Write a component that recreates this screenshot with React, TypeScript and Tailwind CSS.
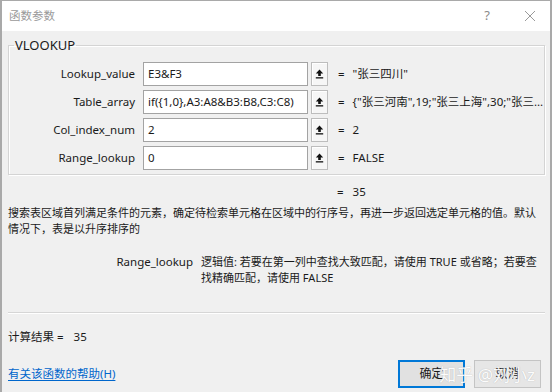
const ui = { fontFamily: '"Noto Sans", "Noto Sans CJK SC", sans-serif' };

function UploadIcon() {
  return (
    <svg width="9" height="10" viewBox="0 0 9 10" aria-hidden="true">
      <path d="M4.5 0.5 L8.2 4.6 H5.8 V7 H3.2 V4.6 H0.8 Z" fill="#111" />
      <rect x="0.8" y="8.2" width="7.4" height="1.3" fill="#111" />
    </svg>
  );
}

type ArgRowProps = { label: string; input: string; value: string };

function ArgRow({ label, input, value }: ArgRowProps) {
  return (
    <div className="flex h-[24px] items-center">
      <div className="w-[126px] text-right text-[11.5px] text-[#1a1a1a]">{label}</div>
      <div className="ml-[8px] flex h-[24px] w-[165px] items-center border border-[#a3a3a3] bg-white pl-[4px] text-[11.5px] text-[#1a1a1a] whitespace-nowrap overflow-hidden">
        {input}
      </div>
      <div className="ml-[3px] flex h-[24px] w-[17px] items-center justify-center border border-[#bdbdbd] bg-[#f6f6f6] shadow-[inset_1px_1px_0_#fff]">
        <UploadIcon />
      </div>
      <div className="ml-[10px] text-[11.5px] text-[#1a1a1a]">=</div>
      <div className="ml-[8px] text-[11.5px] text-[#1a1a1a] whitespace-nowrap">{value}</div>
    </div>
  );
}

export default function App() {
  return (
    <div className="flex h-[392px] w-[554px] overflow-hidden bg-white" style={ui}>
      <div className="flex h-full w-[552px] flex-col border-x-2 border-t border-[#a9a9a9]">
        <div className="flex h-[30px] items-center bg-white pl-[7px] pr-[14px]">
          <span className="text-[11.5px] text-[#9a9a9a]">函数参数</span>
          <span className="ml-auto text-[13px] text-[#8a8a8a]">?</span>
          <svg className="ml-[34px]" width="12" height="12" viewBox="0 0 12 12" aria-hidden="true">
            <path d="M1 1 L11 11 M11 1 L1 11" stroke="#9a9a9a" strokeWidth="1" />
          </svg>
        </div>

        <div className="flex flex-1 flex-col bg-[#f0f0f0] pl-[6px] pr-[5px]">
          <fieldset className="mt-[6px] border border-[#d4d4d4] pb-[4px] shadow-[inset_1px_1px_0_#fff,1px_1px_0_#fff]">
            <legend className="ml-[5px] px-[1px] text-[13px] leading-[16px] text-[#1a1a1a]">VLOOKUP</legend>
            <div className="mt-[9px] flex flex-col gap-[4px]">
              <ArgRow label="Lookup_value" input="E3&F3" value={'"张三四川"'} />
              <ArgRow
                label="Table_array"
                input="if({1,0},A3:A8&B3:B8,C3:C8)"
                value={'{"张三河南",19;"张三上海",30;"张三…'}
              />
              <ArgRow label="Col_index_num" input="2" value="2" />
              <ArgRow label="Range_lookup" input="0" value="FALSE" />
            </div>
          </fieldset>

          <div className="mt-[9px] flex h-[16px] items-center pl-[329px] text-[11.5px] text-[#1a1a1a]">
            <span>=</span>
            <span className="ml-[9px]">35</span>
          </div>

          <p className="mt-[5px] text-[11px] leading-[16px] text-[#1a1a1a]">
            搜索表区域首列满足条件的元素，确定待检索单元格在区域中的行序号，再进一步返回选定单元格的值。默认
            <br />
            情况下，表是以升序排序的
          </p>

          <div className="mt-[17px] flex text-[#1a1a1a]">
            <div className="w-[185px] text-right text-[11.5px] leading-[16px]">Range_lookup</div>
            <p className="ml-[8px] text-[11px] leading-[16px]">
              逻辑值: 若要在第一列中查找大致匹配，请使用 TRUE 或省略；若要查
              <br />
              找精确匹配，请使用 FALSE
            </p>
          </div>

          <div className="mt-[26px] h-[2px] border-t border-[#d6d6d6] bg-white" />

          <div className="mt-[15px] flex h-[16px] items-center text-[11.5px] text-[#1a1a1a]">
            <span>计算结果 =</span>
            <span className="ml-[10px] text-[11.5px]">35</span>
          </div>

          <div className="relative mt-[15px] flex items-center pr-[4px]">
            <a className="text-[11.5px] text-[#0066cc] underline underline-offset-2" href="#">
              有关该函数的帮助(H)
            </a>
            <button className="ml-auto h-[28px] w-[67px] border-2 border-[#0078d7] bg-[#e1e1e1] text-[12px] text-[#1a1a1a]">
              确定
            </button>
            <button className="ml-[9px] h-[28px] w-[67px] border border-[#c4c4c4] bg-[#e6e6e6] text-[12px] text-[#1a1a1a]">
              取消
            </button>
            <div className="pointer-events-none absolute right-[10px] top-[2px] text-[17px] text-white opacity-90 [text-shadow:0_0_1px_#aaa]">
              知乎 @刘小z
            </div>
          </div>
        </div>
      </div>
    </div>
  );
}
